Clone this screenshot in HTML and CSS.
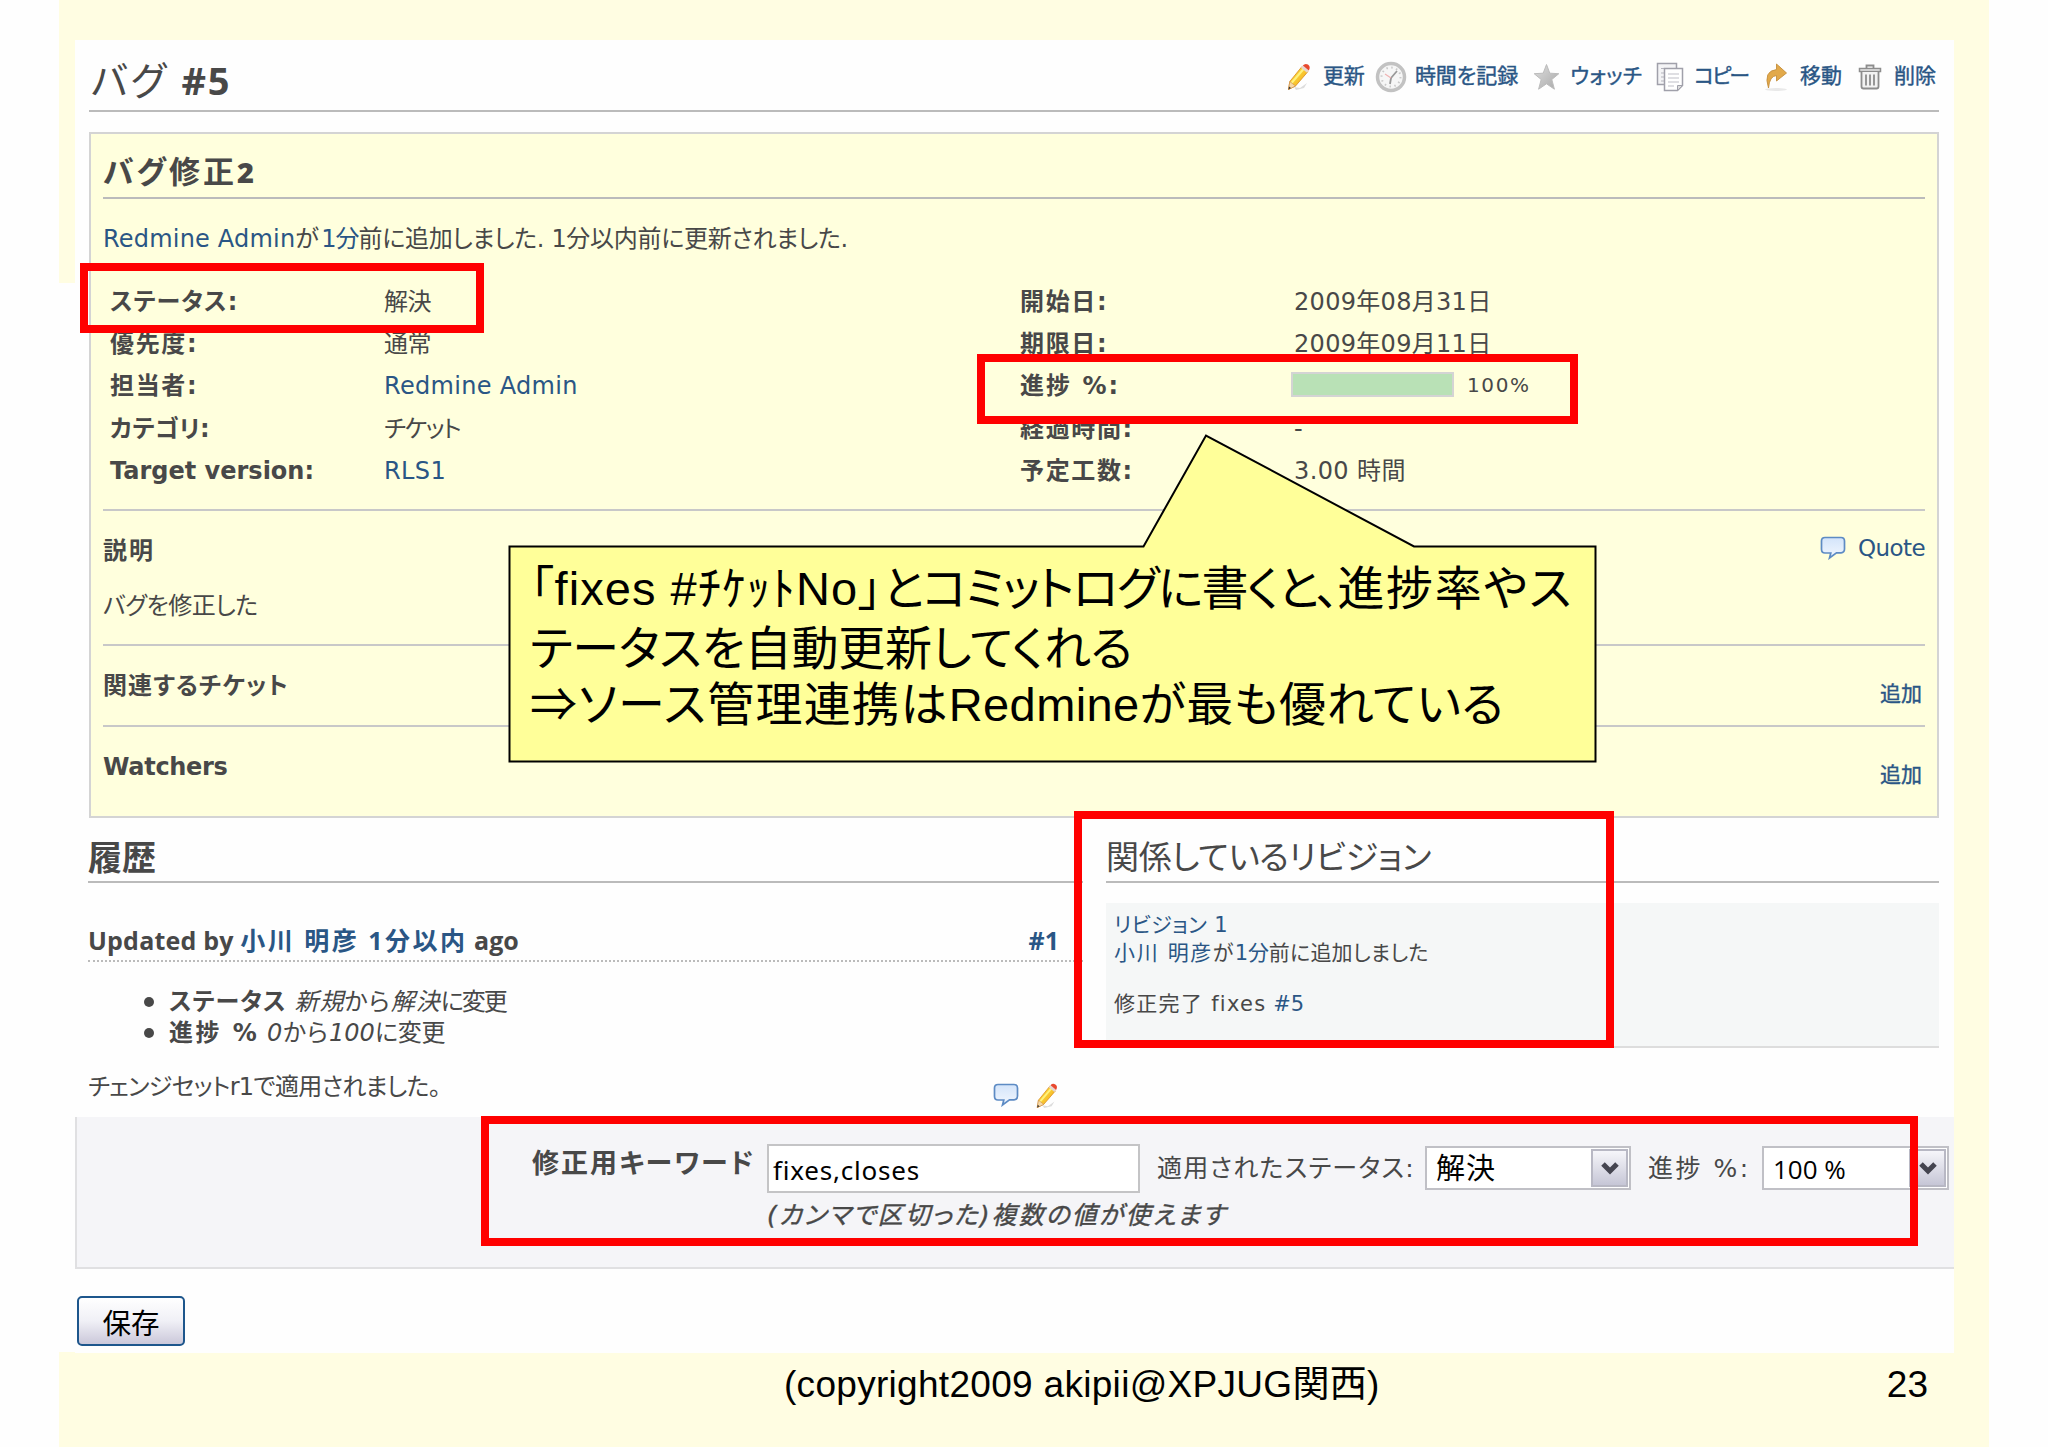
FILE: index.html
```html
<!DOCTYPE html>
<html lang="ja">
<head>
<meta charset="utf-8">
<title>バグ #5</title>
<link rel="stylesheet" href="styles.css">
</head>
<body>
<svg class="defs" width="0" height="0">
  <defs>
    <linearGradient id="gBub" x1="0" y1="0" x2="0" y2="1"><stop offset="0" stop-color="#d3e4fa"/><stop offset="1" stop-color="#f2f7fe"/></linearGradient>
    <linearGradient id="gPen" x1="0" y1="0" x2="1" y2="1"><stop offset="0" stop-color="#ffe94a"/><stop offset="1" stop-color="#f2a516"/></linearGradient>
    <linearGradient id="gStar" x1="0" y1="0" x2="1" y2="1"><stop offset="0" stop-color="#dedede"/><stop offset="1" stop-color="#a9a9a9"/></linearGradient>
    <symbol id="pencil" viewBox="0 0 24 28">
      <path d="M7 24l6 1 7-5-3 5-8 2z" fill="#ddd"/>
      <path d="M1.500 26.500l1.300-8L15 3.500l6 5L8.500 23z" fill="url(#gPen)" stroke="#d98a1c" stroke-width=".8"/>
      <path d="M4.500 20L17 5.500" stroke="#fff27e" stroke-width="2"/>
      <path d="M1.500 26.500l1.300-8 5.700 4.500z" fill="#f6d9a8" stroke="#c98a4a" stroke-width=".6"/>
      <path d="M1.500 26.500l.5-3 2 1.500z" fill="#333"/>
      <path d="M14 4.700l1.800-2.200 6 5L20 9.700z" fill="#e6d6d0"/>
      <path d="M15.800 2.500Q18 0 21 1.500 24 3.500 21.800 7.500z" fill="#e8482e"/>
    </symbol>
    <symbol id="bubble" viewBox="0 0 26 24">
      <path d="M5 1.500h16q3.500 0 3.500 3.500v8q0 3.500-3.500 3.800h-4.500L9.500 22l1.300-5H5q-3.500 0-3.500-3.700V5Q1.500 1.500 5 1.500z" fill="url(#gBub)" stroke="#5d8bc4" stroke-width="1.700"/>
    </symbol>
  </defs>
</svg>
<main class="slide">
  <section class="capture">
    <header class="top">
      <h2><span class="p29">バグ</span> <b class="p18">#5</b></h2>
      <nav class="tools">
        <a><i><svg width="24" height="28"><use href="#pencil"/></svg></i><span>更新</span></a>
        <a><i><svg width="32" height="32" viewBox="0 0 32 32"><circle cx="16" cy="16" r="13.500" fill="#f6f6f6" stroke="#c2c2c2" stroke-width="3.500"/><circle cx="16" cy="16" r="9.500" fill="none" stroke="#c9c9c9" stroke-width="2" stroke-dasharray="1.500 3.470"/><path d="M16 17l6-7M16 17l-1 6" stroke="#999" stroke-width="1.800" fill="none"/><path d="M16 17l-6-4" stroke="#eeb0b0" stroke-width="1.200"/></svg></i><span>時間を記録</span></a>
        <a><i><svg width="27" height="28" viewBox="0 0 27 28"><path d="M13.500 1.500l3.300 8.700 9 .5-7 5.800 2.600 9.700-7.900-5.400-7.900 5.400 2.600-9.700-7-5.800 9-.5z" fill="url(#gStar)" stroke="#bcbcbc"/></svg></i><span class="p02">ウォッチ</span></a>
        <a><i><svg width="28" height="30" viewBox="0 0 28 30"><path d="M1.500 1.500h19v21h-19z" fill="#f4f4f6" stroke="#a0a0aa" stroke-width="1.500"/><path d="M5 6.500h4M5 11h3M5 15h3M5 19h3" stroke="#b5b5bd"/><path d="M8.500 6.500h18v17l-5 5h-13z" fill="#fff" stroke="#a0a0aa" stroke-width="1.500"/><path d="M12 12h11M12 16h11M12 20h11M12 24h6" stroke="#c0c0c8" stroke-width="1.200"/><path d="M26.500 23.500h-5v5z" fill="#ddd" stroke="#a0a0aa"/></svg></i><span class="n21">コピー</span></a>
        <a><i><svg width="24" height="30" viewBox="0 0 24 30"><ellipse cx="12" cy="27.500" rx="11" ry="1.500" fill="#e9e9e9"/><path d="M4.500 26Q-1 9 12.500 7.500V2L22.500 11l-10 8v-5.500Q5.500 14 4.500 26z" fill="#e2a94a" stroke="#c58f3c" stroke-width=".9"/></svg></i><span>移動</span></a>
        <a><i><svg width="24" height="26" viewBox="0 0 24 26" fill="none" stroke="#8d8d8d"><path d="M8.500 4V1.500h7V4" stroke-width="1.800"/><path d="M1.500 4.500h21v3h-21z" fill="#e8e8e8" stroke-width="1.500"/><path d="M3.500 8v14.500q0 2 2 2h13q2 0 2-2V8" fill="#f2f2f2" stroke-width="1.800"/><path d="M8 10.500v11M12 10.500v11M16 10.500v11" stroke-width="1.800"/></svg></i><span>削除</span></a>
      </nav>
    </header>

    <article class="issue">
      <h3><span class="p30">バグ修正<b>2</b></span></h3>
      <p class="author"><a class="p02">Redmine Admin</a><span class="p25">が</span><a class="n11">1分</a><span class="n03">前に追加しました. 1分以内前に更新されました.</span></p>
      <div class="attrs">
        <b class="p10">ステータス:</b><span class="n05">解決</span><b class="p16">開始日:</b><span class="p03">2009年08月31日</span>
        <b class="p16">優先度:</b><span class="n05">通常</span><b class="p16">期限日:</b><span class="p03">2009年09月11日</span>
        <b class="p16">担当者:</b><a class="p03">Redmine Admin</a><b class="p20">進捗 %:</b><span class="progress"><i></i><small class="p16">100%</small></span>
        <b class="p03">カテゴリ:</b><span class="n14">チケット</span><b class="p16">経過時間:</b><span>-</span>
        <b>Target version:</b><a class="p04">RLS1</a><b class="p16">予定工数:</b><span class="p04">3.00 時間</span>
      </div>
      <section class="desc">
        <div class="line"><b class="p20">説明</b><a class="quote"><svg width="26" height="24"><use href="#bubble"/></svg><span class="n06">Quote</span></a></div>
        <p class="n05">バグを修正した</p>
      </section>
      <section class="line related"><b class="p10">関連するチケット</b><a class="add">追加</a></section>
      <section class="line watch"><b class="n03">Watchers</b><a class="add">追加</a></section>
    </article>

    <div class="columns">
      <section class="history">
        <h3>履歴</h3>
        <h4><span><span class="p02">Updated by </span><a class="p25">小川 明彦 1分以内</a><span> ago</span></span><a>#1</a></h4>
        <ul>
          <li><b class="p10">ステータス</b> <em class="p10">新規</em><span class="p10">から</span><em class="p10">解決</em><span class="n21">に変更</span></li>
          <li><b class="p25">進捗 %</b> <em class="p06">0</em><span class="p10">から</span><em>100</em><span class="n03">に変更</span></li>
        </ul>
        <div class="note"><span class="n07">チェンジセットr1で適用されました。</span><span class="acts"><svg width="26" height="24"><use href="#bubble"/></svg><svg width="24" height="26"><use href="#pencil"/></svg></span></div>
      </section>
      <section class="revisions">
        <h3 class="n02">関係しているリビジョン</h3>
        <div class="changeset">
          <p><a class="p04">リビジョン 1</a></p>
          <p><a class="p16">小川 明彦</a><span class="p13">が</span><a class="n02">1分</a><span class="p02">前に追加しました</span></p>
          <p class="msg"><span class="p13">修正完了 fixes</span> <a>#5</a></p>
        </div>
      </section>
    </div>

    <form class="settings">
      <b class="kw p20">修正用キーワード</b>
      <div class="field p08">fixes,closes</div>
      <label class="l1 p13">適用されたステータス:</label>
      <div class="select s1"><span class="p10">解決</span><i><svg width="18" height="13" viewBox="0 0 18 13"><path d="M2 2l7 7 7-7" fill="none" stroke="#454550" stroke-width="5"/></svg></i></div>
      <label class="l2 p25">進捗 %:</label>
      <div class="select s2"><span>100 %</span><i><svg width="18" height="13" viewBox="0 0 18 13"><path d="M2 2l7 7 7-7" fill="none" stroke="#454550" stroke-width="5"/></svg></i></div>
      <em class="hint p20">(カンマで区切った)複数の値が使えます</em>
    </form>
    <button class="save">保存</button>
  </section>
  <footer><span class="p03">(copyright2009 akipii@XPJUG関西)</span><span class="page">23</span></footer>
</main>

<div class="mark m1"></div>
<div class="mark m2"></div>
<div class="mark m3"></div>
<div class="mark m4"></div>
<div class="callout">
  <svg width="1090" height="330" viewBox="0 0 1090 330"><path d="M1.500 112.500H635.500L698 1.500 906 112.500H1087.500V327.500H1.500z" fill="#ffff99" stroke="#000" stroke-width="2"/></svg>
  <p><span class="p10">「fixes #ﾁｹｯﾄNo」</span><span class="n16">とコミットログに書くと、</span><span class="p16">進捗率やス</span></p>
  <p class="n02">テータスを自動更新してくれる</p>
  <p class="c3"><span class="p13">⇒ソース管理連携は</span><span class="p04">Redmine</span><span class="p06">が最も優れている</span></p>
</div>
</body>
</html>
```
FILE: styles.css
```css
* { box-sizing: border-box; }
body {
  margin: 0;
  width: 2048px;
  height: 1447px;
  overflow: hidden;
  position: relative;
  background: #fefefe;
  color: #484848;
  font: 24px/32px "DejaVu Sans", "Noto Sans CJK JP", sans-serif;
  white-space: nowrap;
}
body * { font-feature-settings: "palt"; }
h2, h3, h4, p, ul { margin: 0; padding: 0; font-weight: normal; }
a { color: #2a5685; }
.defs { position: absolute; }

/* tracking steps, tenths of a pixel */
.n21 { letter-spacing: -2.1px; }
.n16 { letter-spacing: -1.6px; }
.n14 { letter-spacing: -1.4px; }
.n11 { letter-spacing: -1.1px; }
.n07 { letter-spacing: -.7px; }
.n06 { letter-spacing: -.6px; }
.n05 { letter-spacing: -.45px; }
.n03 { letter-spacing: -.3px; }
.n02 { letter-spacing: -.2px; }
.p02 { letter-spacing: .2px; }
.p03 { letter-spacing: .3px; }
.p04 { letter-spacing: .4px; }
.p06 { letter-spacing: .6px; }
.p08 { letter-spacing: .8px; }
.p10 { letter-spacing: 1.05px; }
.p13 { letter-spacing: 1.3px; }
.p16 { letter-spacing: 1.65px; }
.p18 { letter-spacing: 1.8px; }
.p20 { letter-spacing: 2.05px; }
.p25 { letter-spacing: 2.5px; }
.p29 { letter-spacing: 2.9px; }
.p30 { letter-spacing: 3px; }

.slide {
  width: 1930px;
  height: 1447px;
  margin-left: 59px;
  padding: 40px 35px 0 16px;
  background: linear-gradient(#fefefe, #fefefe) no-repeat 0 283px / 16px 1069px, #fffde2;
}
.capture { height: 1313px; background: #fefefe; }

.top {
  display: flex;
  justify-content: space-between;
  height: 72px;
  margin: 0 15px 0 14px;
  border-bottom: 2px solid #bbb;
}
.top h2 { padding: 13px 0 0 2px; font-size: 39px; line-height: 54px; }
.top h2 b { font-family: "Open Sans", sans-serif; font-size: 38px; }
.tools { display: flex; gap: 12px; padding: 20px 3px 0 0; font-size: 21px; line-height: 32px; }
.tools a { display: flex; gap: 8px; height: 34px; -webkit-text-stroke: .4px #2a5685; }
.tools a:first-child { margin-right: -2px; }
.tools i { display: flex; width: 32px; height: 34px; align-items: center; justify-content: center; }

.issue {
  height: 686px;
  margin: 20px 15px 0 14px;
  padding: 0 12px;
  border: 2px solid #d4d4d4;
  background: #ffffdd;
}
.issue h3 { height: 65px; padding-top: 12px; border-bottom: 2px solid #bbb; font-size: 31px; font-weight: bold; line-height: 52px; }
.issue h3 b { font-family: "Open Sans", sans-serif; font-size: 29px; }
.author { height: 81px; line-height: 81px; }
.attrs {
  display: grid;
  grid-template-columns: 274px 636px 274px 1fr;
  grid-auto-rows: 42.2px;
  height: 231px;
  padding-left: 7px;
  border-bottom: 2px solid #c8c8c8;
  line-height: 44px;
}
.progress { display: flex; align-items: center; gap: 13px; }
.progress i { width: 163px; height: 25px; margin: -1px 0 0 -3px; border: 2px solid #d4d4d4; background: #b9e1b6; }
.progress small { font-size: 20px; }
.line { display: flex; justify-content: space-between; line-height: 80px; }
.desc { height: 135px; border-bottom: 2px solid #c8c8c8; }
.desc .line { height: 79px; }
.desc p { line-height: 32px; }
.quote { display: flex; align-items: center; gap: 12px; height: 74px; font-size: 23px; }
.related { height: 81px; border-bottom: 2px solid #c8c8c8; }
.add { padding: 8px 3px 0 0; font-size: 21px; -webkit-text-stroke: .4px #2a5685; }

.columns { display: grid; grid-template-columns: 995px 833px; gap: 23px; height: 298px; margin: 1px 0 0 13px; }
.columns h3 { height: 64px; padding-top: 16px; border-bottom: 2px solid #bbb; line-height: 46px; }
.history h3 { font-size: 34px; font-weight: bold; }
.revisions h3 { font-size: 33px; }
.history h4 {
  display: flex;
  justify-content: space-between;
  margin-top: 37px;
  padding-right: 24px;
  border-bottom: 2px dotted #bbb;
  font: bold 25px/40px "Open Sans", "Noto Sans CJK JP", sans-serif;
}
.history ul { margin: 25px 0 0 80px; list-style: none; line-height: 31px; }
.history h4 > span, .history li { white-space: pre; }
.history li::before { content: ""; display: inline-block; width: 10px; height: 10px; margin: 0 15px 3px -24px; border-radius: 50%; background: #484848; }
.note { display: flex; justify-content: space-between; padding-right: 24px; line-height: 77px; }
.acts { display: flex; gap: 16px; padding-top: 34px; }
.changeset { height: 145px; margin-top: 20px; padding: 8px 8px 0; border-bottom: 2px solid #ddd; background: #f5f7f7; font-size: 21px; line-height: 28px; }
.changeset .msg { margin-top: 23px; }

.settings {
  display: grid;
  grid-template-columns: 457px 233px 373px 17px 268px 206px 17px 114px 187px;
  grid-template-rows: 75px 1fr;
  height: 152px;
  border: solid #e0e0e2;
  border-width: 0 0 2px 2px;
  background: #f5f5f8;
}
.kw { grid-column: 2; margin-left: -2px; font-size: 27px; line-height: 94px; }
.field { grid-column: 3; height: 49px; margin-top: 27px; padding: 3px 4px; border: 2px solid #c4c4c6; background: #fff; color: #000; font-family: "Noto Sans", sans-serif; font-size: 26px; line-height: 43px; }
.settings label { line-height: 103px; font-size: 25px; }
.l1 { grid-column: 5; }
.l2 { grid-column: 8; }
.select { display: flex; justify-content: space-between; height: 44px; margin-top: 29px; padding: 1px; border: 2px solid #c0c0c6; background: #fff; color: #000; line-height: 41px; }
.select span { padding-left: 8px; font-size: 29px; }
.select i { display: flex; align-items: center; justify-content: center; width: 37px; border: 2px solid #b8b8c4; background: linear-gradient(#f6f6fa, #c6c6d6); }
.s1 { grid-column: 6; }
.s2 { grid-column: 9; font-family: "Open Sans", sans-serif; }
.s2 span { font-size: 26px; }
.hint { grid-column: 3 / 7; font-size: 25px; line-height: 47px; -webkit-text-stroke: .4px #484848; }
.save { display: block; width: 108px; height: 50px; margin: 27px 0 0 2px; padding: 0; border: 2px solid #1d568c; border-radius: 5px; background: linear-gradient(#fff, #f0f0f6 50%, #cbc8da); color: #000; font: 28.500px/41px "Noto Sans CJK JP", sans-serif; }

footer { display: flex; justify-content: space-between; padding: 9px 26px 0 709px; color: #000; font: 37px/45px "Liberation Sans", "Noto Sans CJK JP", sans-serif; }

.mark { position: absolute; border: 8px solid #f00; }
.m1 { left: 80px; top: 263px; width: 404px; height: 70px; }
.m2 { left: 977px; top: 354px; width: 601px; height: 70px; }
.m3 { left: 1074px; top: 811px; width: 540px; height: 237px; }
.m4 { left: 481px; top: 1116px; width: 1437px; height: 130px; }
.callout { position: absolute; left: 508px; top: 434px; width: 1090px; height: 330px; padding: 125px 0 0 22px; color: #000; font: 47px/60px "Liberation Sans", "Noto Sans CJK JP", sans-serif; }
.callout svg { position: absolute; left: 0; top: 0; }
.callout p { position: relative; }
.c3 { margin-top: -4px; }
```
